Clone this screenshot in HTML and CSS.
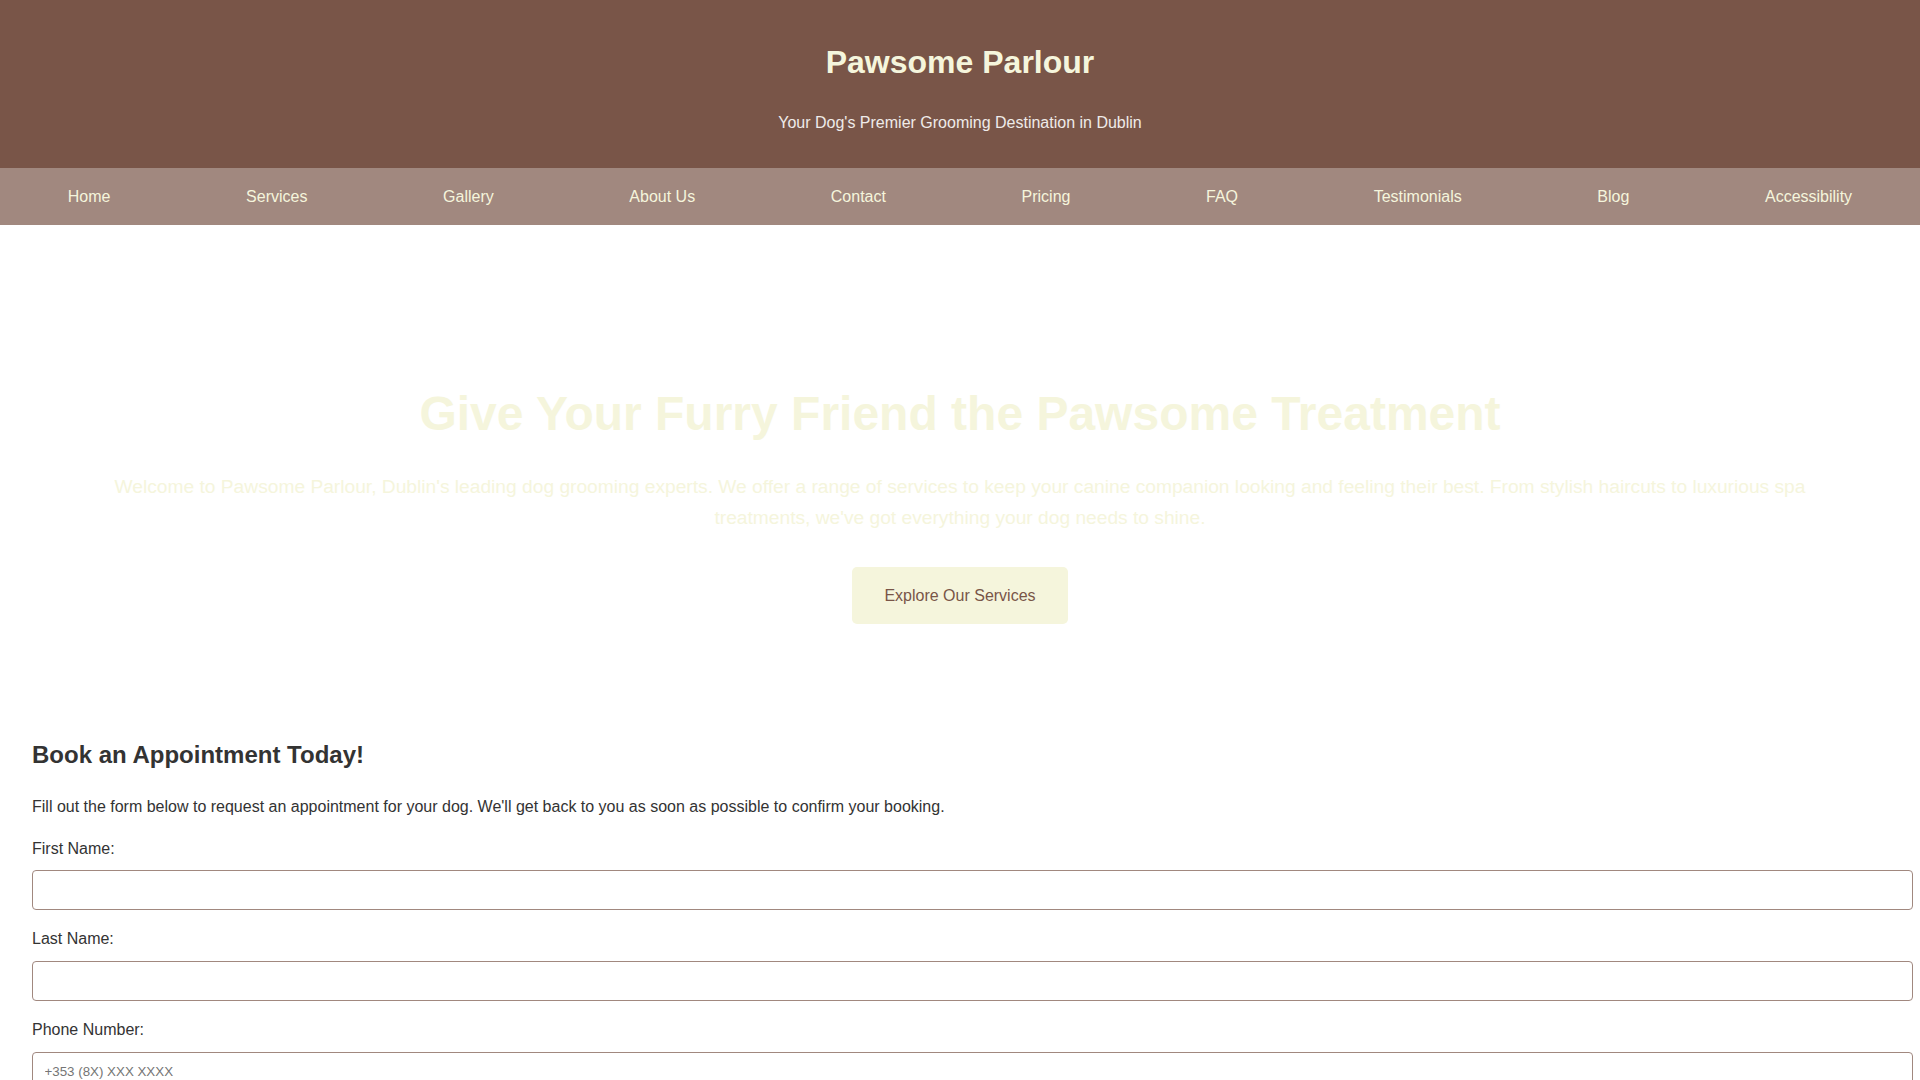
FILE: index.html
```html
<!DOCTYPE html>
<html lang="en">
<head>
  <meta charset="UTF-8" />
  <meta name="viewport" content="width=device-width, initial-scale=1.0" />
  <title>Pawsome Parlour - Dog Grooming in Dublin</title>
  <link rel="stylesheet" href="styles.css">
</head>
<body>

  <header>
    <h1>Pawsome Parlour</h1>
    <p>Your Dog's Premier Grooming Destination in Dublin</p>
  </header>

  <nav>
    <ul class="nav-list">
      <li><a href="#">Home</a></li>
      <li><a href="#">Services</a></li>
      <li><a href="#">Gallery</a></li>
      <li><a href="#">About Us</a></li>
      <li><a href="#">Contact</a></li>
      <li><a href="#">Pricing</a></li>
      <li><a href="#">FAQ</a></li>
      <li><a href="#">Testimonials</a></li>
      <li><a href="#">Blog</a></li>
      <li><a href="#">Accessibility</a></li>
    </ul>
  </nav>

  <section class="hero">
    <h2>Give Your Furry Friend the Pawsome Treatment</h2>
    <p>Welcome to Pawsome Parlour, Dublin's leading dog grooming experts. We offer a range of services to keep your canine companion looking and feeling their best. From stylish haircuts to luxurious spa treatments, we've got everything your dog needs to shine.</p>
    <div class="hero-action">
      <a href="#" class="btn">Explore Our Services</a>
    </div>
  </section>

  <section class="booking">
    <h2>Book an Appointment Today!</h2>
    <p>Fill out the form below to request an appointment for your dog. We'll get back to you as soon as possible to confirm your booking.</p>

    <form>
      <label for="firstName">First Name:</label>
      <input type="text" id="firstName" name="firstName">

      <label for="lastName">Last Name:</label>
      <input type="text" id="lastName" name="lastName">

      <label for="phone">Phone Number:</label>
      <input type="tel" id="phone" name="phone" placeholder="+353 (8X) XXX XXXX">

      <label for="email">Email Address:</label>
      <input type="email" id="email" name="email">

      <label for="dogName">Dog's Name:</label>
      <input type="text" id="dogName" name="dogName">
    </form>
  </section>

</body>
</html>
```

FILE: styles.css
```css
body {
  font-family: "Liberation Sans", Arial, sans-serif;
  line-height: 1.6;
  color: #333;
  background-color: #fff;
  margin: 0;
  padding: 0;
}
header {
  background-color: #795548;
  color: #f5f5dc;
  text-align: center;
  padding: 1rem;
}
header h1 {
  font-size: 2em;
  margin: 0.67em 0;
}
header p {
  color: #efebe9;
  margin: 1em 0;
}
nav {
  background-color: #a1887f;
  padding: 16px 0;
}
.nav-list {
  list-style: none;
  margin: 0;
  padding: 0;
  display: flex;
  justify-content: space-around;
}
.nav-list a {
  color: #f5f5dc;
  text-decoration: none;
}
.hero {
  text-align: center;
  color: #f5f5dc;
  padding: 151px 0 60px;
}
.hero h2 {
  font-size: 3em;
  margin: 0 0 19px;
}
.hero p {
  font-size: 1.2em;
  max-width: 1720px;
  margin: 0 auto 34px;
}
.btn {
  display: inline-block;
  background-color: #f5f5dc;
  color: #795548;
  text-decoration: none;
  padding: 15.5px 2rem;
  border-radius: 5px;
}
.booking {
  padding: 2rem;
}
.booking h2 {
  font-size: 1.5em;
  margin: 0.83em 0;
}
.booking p {
  margin: 0 0 1em;
}
label {
  display: block;
  margin-bottom: 9px;
}
input {
  width: 100%;
  font-family: "Liberation Sans", Arial, sans-serif;
  font-size: 13.333px;
  line-height: 16px;
  padding: 11px 11.5px;
  border: 1px solid #a1887f;
  border-radius: 4px;
  margin: 0 0 1rem;
}
input::placeholder {
  color: #757575;
}
```
